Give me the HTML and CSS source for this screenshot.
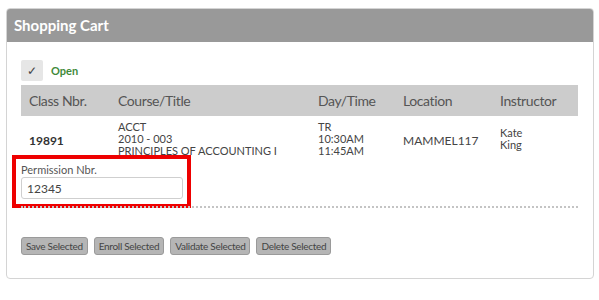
FILE: index.html
```html
<!DOCTYPE html>
<html lang="en">
  <head>
    <meta charset="utf-8">
    <title>Shopping Cart</title>
    <link rel="stylesheet" href="styles.css">
  </head>
  <body>

    <div class="panel">
      <div class="panel-head">Shopping Cart</div>

      <div class="panel-body">
        <div class="status">
          <span class="check">&#10003;</span>
          <span class="status-text">Open</span>
        </div>

        <div class="grid grid-head">
          <div>Class Nbr.</div>
          <div>Course/Title</div>
          <div>Day/Time</div>
          <div>Location</div>
          <div>Instructor</div>
        </div>

        <div class="grid grid-row">
          <div class="nbr">19891</div>
          <div class="small">ACCT<br>2010 - 003<br>PRINCIPLES OF ACCOUNTING I</div>
          <div class="small">TR<br>10:30AM<br>11:45AM</div>
          <div class="loc">MAMMEL117</div>
          <div class="small inst">Kate<br>King</div>
        </div>

        <div class="perm">
          <label class="perm-label">Permission Nbr.</label>
          <input class="perm-input" type="text" value="12345">
        </div>

        <div class="dots"></div>

        <div class="buttons">
          <button class="btn">Save Selected</button>
          <button class="btn">Enroll Selected</button>
          <button class="btn">Validate Selected</button>
          <button class="btn">Delete Selected</button>
        </div>
      </div>
    </div>

  </body>
</html>
```

FILE: styles.css
```css
html {
  height: 100%;
}
body {
  margin: 0;
  padding: 0;
  background: #ffffff;
  font-family: Lato, "Liberation Sans", sans-serif;
  color: #444;
}

.panel {
  margin: 8px 0 0 6px;
  width: 586px;
  height: 269px;
  border: 1px solid #d4d4d4;
  border-radius: 4px;
  overflow: hidden;
}

.panel-head {
  height: 33px;
  line-height: 33px;
  background: #999999;
  color: #ffffff;
  font-size: 15px;
  font-weight: bold;
  padding-left: 7px;
}

.panel-body {
  padding: 18px 15px 0 14px;
}

.status {
  display: flex;
  align-items: center;
  height: 21px;
}
.check {
  width: 22px;
  height: 21px;
  line-height: 21px;
  text-align: center;
  background: #e6e6e6;
  border-radius: 2px;
  font-size: 12px;
  color: #444;
}
.status-text {
  margin-left: 8px;
  font-size: 11px;
  font-weight: bold;
  color: #3f8a3a;
}

.grid {
  display: grid;
  grid-template-columns: 89px 200px 85px 97px 1fr;
}
.grid > div {
  padding-left: 8px;
}
.grid-head {
  margin-top: 4px;
  height: 31px;
  line-height: 31px;
  background: #cccccc;
  font-size: 14px;
  letter-spacing: -0.4px;
  color: #555;
}
.grid-row {
  box-sizing: border-box;
  height: 39px;
  align-items: start;
  padding-top: 5px;
  color: #444;
}
.small {
  font-size: 11px;
  line-height: 12px;
}
.nbr {
  font-size: 12px;
  font-weight: bold;
  margin-top: 12px;
  color: #333;
}
.loc {
  font-size: 12px;
  margin-top: 12px;
}
.inst {
  margin-top: 6px;
}

.perm {
  width: 166px;
  margin-left: -9px;
  border: 4px solid #ee0000;
  padding: 3px 0 5px 5px;
}
.perm-label {
  display: block;
  font-size: 11px;
  line-height: 15px;
  height: 15px;
  color: #555;
}
.perm-input {
  display: block;
  box-sizing: border-box;
  width: 162px;
  height: 22px;
  margin: 0;
  border: 1px solid #cfcfcf;
  border-radius: 3px;
  padding: 0 5px;
  font-family: Lato, "Liberation Sans", sans-serif;
  font-size: 12px;
  color: #444;
}

.dots {
  margin-top: -2px;
  border-top: 2px dotted #c4c4c4;
}

.buttons {
  display: flex;
  gap: 6px;
  margin-top: 29px;
}
.btn {
  height: 18px;
  padding: 0 4px;
  background: #b5b5b5;
  border: 1px solid #9a9a9a;
  border-radius: 3px;
  font-family: Lato, "Liberation Sans", sans-serif;
  font-size: 10px;
  letter-spacing: -0.3px;
  color: #444;
}
```
